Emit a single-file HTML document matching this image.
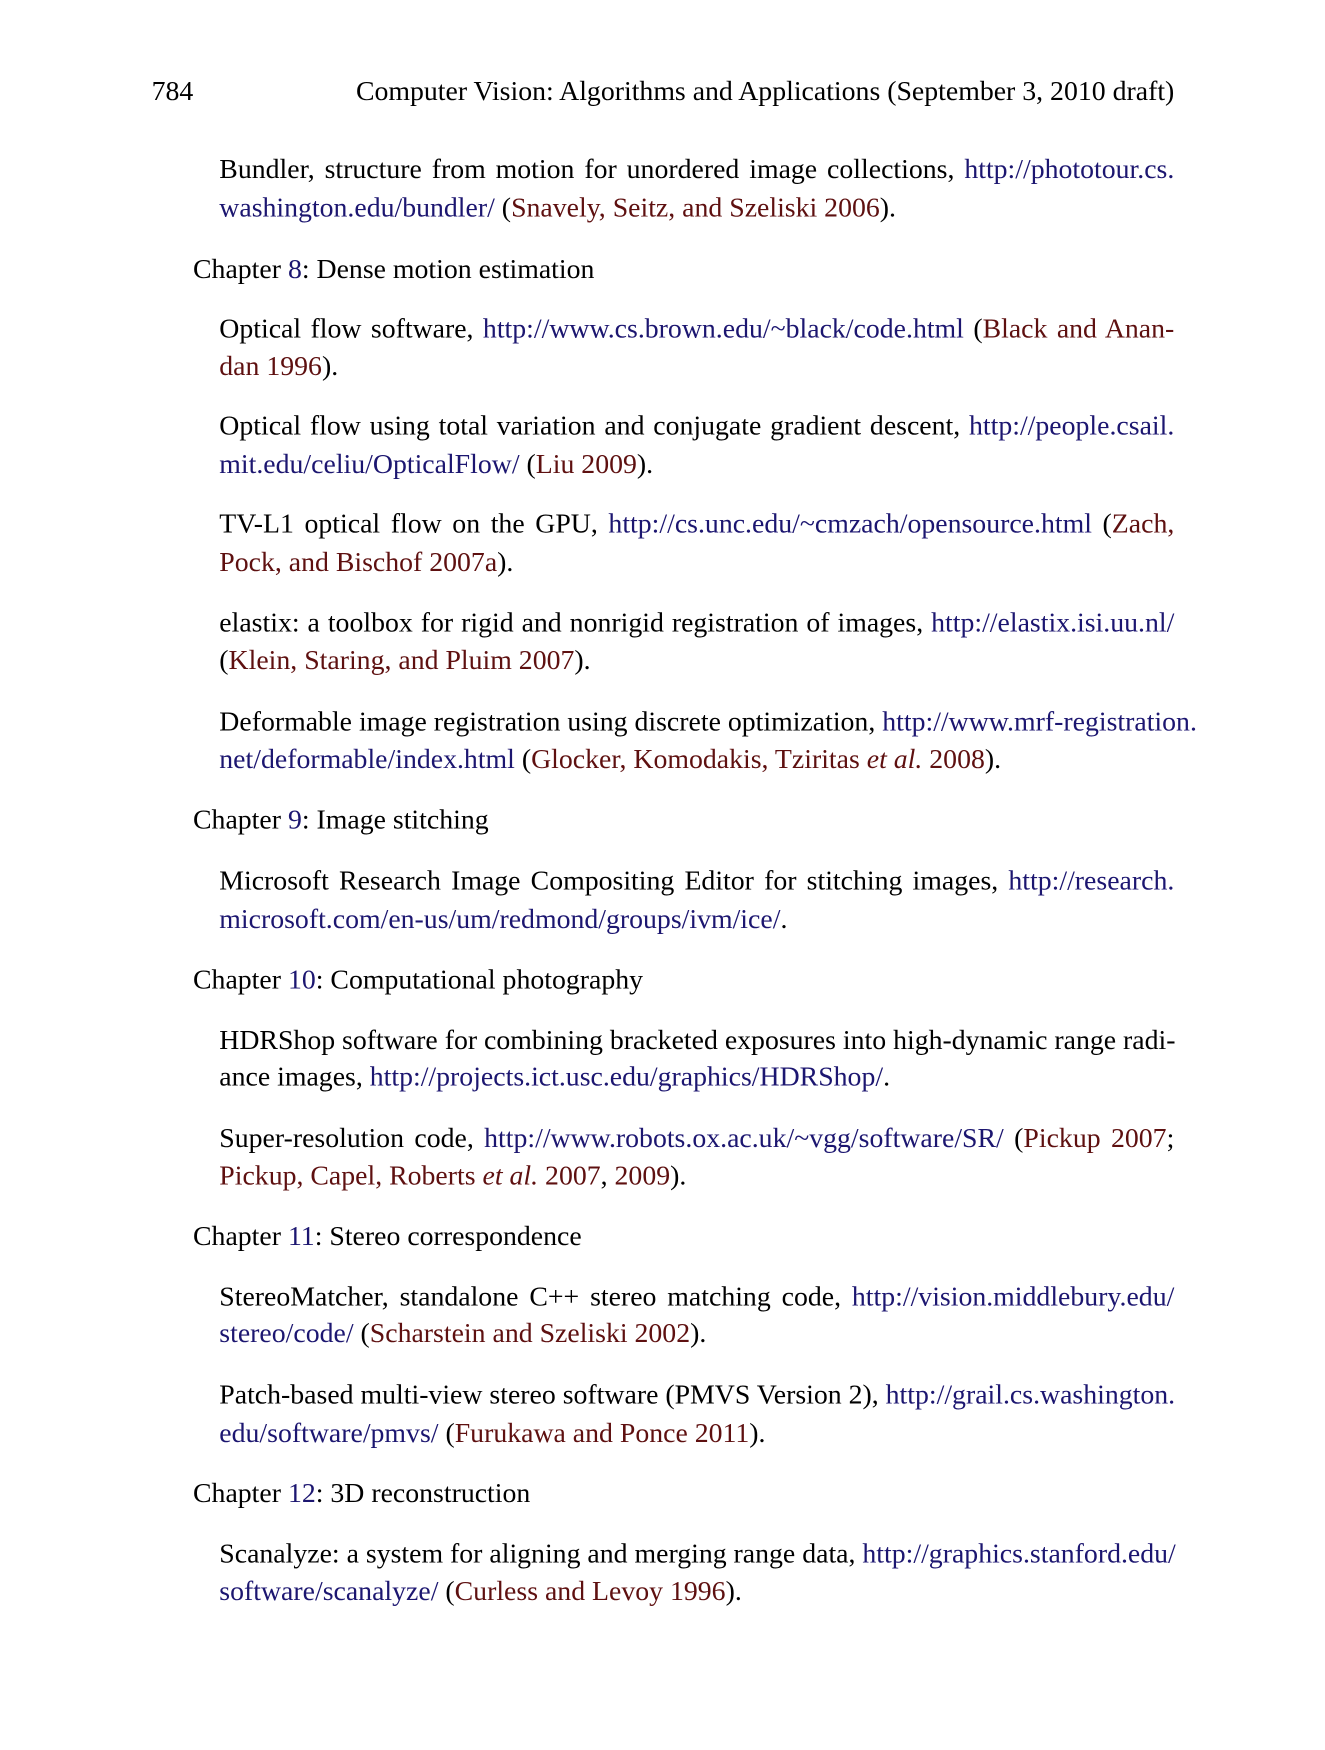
<!DOCTYPE html>
<html><head><meta charset="utf-8"><style>
body{margin:0;background:#fff;}
.w{width:1325px;height:1750px;overflow:hidden;position:relative;}
.p{position:absolute;left:0;top:0;width:1325px;height:1750px;transform-origin:0 0;transform:translate(1px,-2px) scale(1.0106);font-family:"Liberation Serif",serif;font-size:27.5px;color:#000;}
.l{position:absolute;line-height:38px;height:38px;white-space:nowrap;}
.j{width:945px;text-align:justify;text-align-last:justify;}
.i{left:216px;}
.c{left:190px;}
.u{color:#1c1670;}
.r{color:#5e1010;}
</style></head><body><div class="w"><div class="p">
<div class="l" style="left:149px;top:73px">784</div>
<div class="l" style="left:350px;top:73px;width:811px;text-align:right">Computer Vision: Algorithms and Applications (September 3, 2010 draft)</div>

<div class="l i j" style="top:150px">Bundler, structure from motion for unordered image collections, <span class="u">http://phototour.cs.</span></div>
<div class="l i" style="top:188px"><span class="u">washington.edu/bundler/</span> (<span class="r">Snavely, Seitz, and Szeliski 2006</span>).</div>

<div class="l c" style="top:249px">Chapter <span class="u">8</span>: Dense motion estimation</div>

<div class="l i j" style="top:308px">Optical flow software, <span class="u">http://www.cs.brown.edu/~black/code.html</span> (<span class="r">Black and Anan-</span></div>
<div class="l i" style="top:345px"><span class="r">dan 1996</span>).</div>

<div class="l i j" style="top:404px">Optical flow using total variation and conjugate gradient descent, <span class="u">http://people.csail.</span></div>
<div class="l i" style="top:442px"><span class="u">mit.edu/celiu/OpticalFlow/</span> (<span class="r">Liu 2009</span>).</div>

<div class="l i j" style="top:501px">TV-L1 optical flow on the GPU, <span class="u">http://cs.unc.edu/~cmzach/opensource.html</span> (<span class="r">Zach,</span></div>
<div class="l i" style="top:539px"><span class="r">Pock, and Bischof 2007a</span>).</div>

<div class="l i j" style="top:599px">elastix: a toolbox for rigid and nonrigid registration of images, <span class="u">http://elastix.isi.uu.nl/</span></div>
<div class="l i" style="top:636px">(<span class="r">Klein, Staring, and Pluim 2007</span>).</div>

<div class="l i j" style="top:697px">Deformable image registration using discrete optimization, <span class="u">http://www.mrf-registration.</span></div>
<div class="l i" style="top:734px"><span class="u">net/deformable/index.html</span> (<span class="r">Glocker, Komodakis, Tziritas <i>et al.</i> 2008</span>).</div>

<div class="l c" style="top:794px">Chapter <span class="u">9</span>: Image stitching</div>

<div class="l i j" style="top:854px">Microsoft Research Image Compositing Editor for stitching images, <span class="u">http://research.</span></div>
<div class="l i" style="top:892px"><span class="u">microsoft.com/en-us/um/redmond/groups/ivm/ice/</span>.</div>

<div class="l c" style="top:952px">Chapter <span class="u">10</span>: Computational photography</div>

<div class="l i j" style="top:1012px">HDRShop software for combining bracketed exposures into high-dynamic range radi-</div>
<div class="l i" style="top:1048px">ance images, <span class="u">http://projects.ict.usc.edu/graphics/HDRShop/</span>.</div>

<div class="l i j" style="top:1109px">Super-resolution code, <span class="u">http://www.robots.ox.ac.uk/~vgg/software/SR/</span> (<span class="r">Pickup 2007</span>;</div>
<div class="l i" style="top:1146px"><span class="r">Pickup, Capel, Roberts <i>et al.</i> 2007</span>, <span class="r">2009</span>).</div>

<div class="l c" style="top:1206px">Chapter <span class="u">11</span>: Stereo correspondence</div>

<div class="l i j" style="top:1266px">StereoMatcher, standalone C++ stereo matching code, <span class="u">http://vision.middlebury.edu/</span></div>
<div class="l i" style="top:1302px"><span class="u">stereo/code/</span> (<span class="r">Scharstein and Szeliski 2002</span>).</div>

<div class="l i j" style="top:1363px">Patch-based multi-view stereo software (PMVS Version 2), <span class="u">http://grail.cs.washington.</span></div>
<div class="l i" style="top:1401px"><span class="u">edu/software/pmvs/</span> (<span class="r">Furukawa and Ponce 2011</span>).</div>

<div class="l c" style="top:1460px">Chapter <span class="u">12</span>: 3D reconstruction</div>

<div class="l i j" style="top:1520px">Scanalyze: a system for aligning and merging range data, <span class="u">http://graphics.stanford.edu/</span></div>
<div class="l i" style="top:1557px"><span class="u">software/scanalyze/</span> (<span class="r">Curless and Levoy 1996</span>).</div>
</div></div></body></html>
